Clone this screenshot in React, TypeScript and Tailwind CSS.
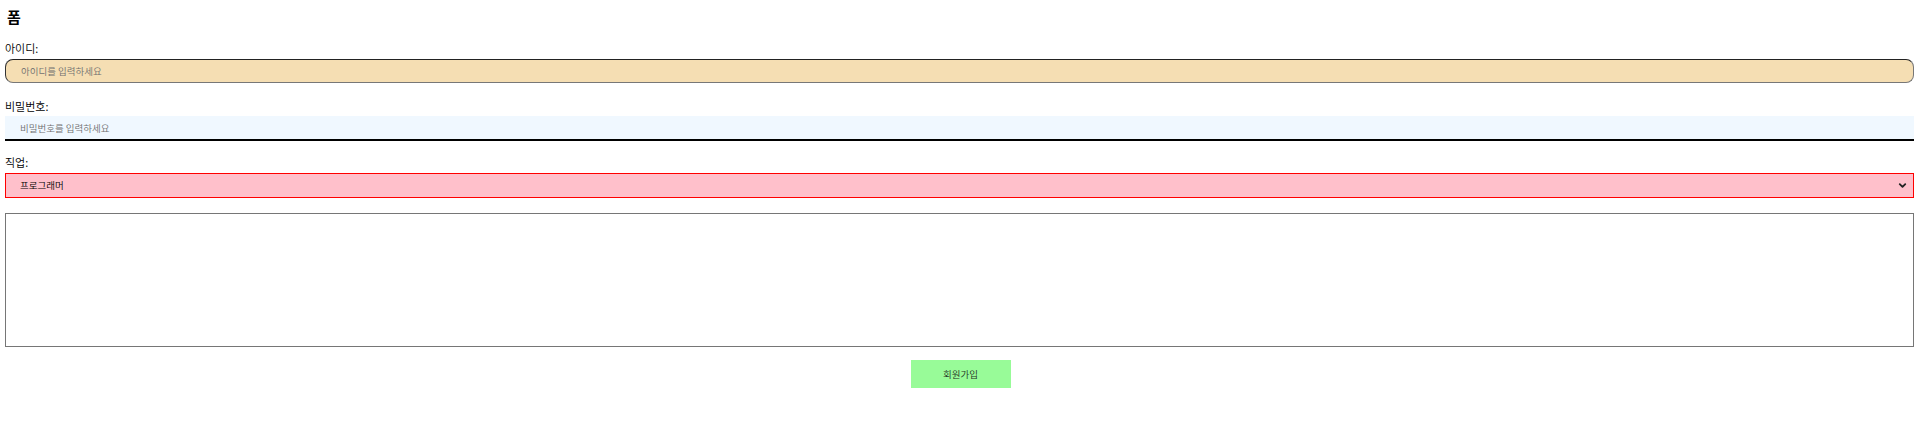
import { ChevronDown } from "lucide-react";

const font = "font-['Noto_Sans_CJK_KR','Noto_Sans',sans-serif]";

export default function App() {
  return (
    <div className={`${font} min-h-[435px] bg-white text-black`}>
      <form className="flex flex-col px-[5px]" onSubmit={(e) => e.preventDefault()}>
        <h3 className="flex h-[34px] items-center pl-[2px] text-[15px] font-semibold">폼</h3>

        <label htmlFor="userId" className="mt-[6px] flex h-[16px] items-center text-[11px] font-[350]">
          아이디:
        </label>
        <input
          id="userId"
          type="text"
          placeholder="아이디를 입력하세요"
          className="mt-[3px] block h-[24px] w-[1909px] rounded-[8px] border border-t-[#222] border-l-[#333] border-r-[#777] border-b-[#777] bg-[#f5deb3] px-[15px] text-[9.5px] font-[350] outline-none placeholder:text-[#6f6f6f]"
        />

        <label htmlFor="userPw" className="mt-[15px] flex h-[16px] items-center text-[11px] font-[350]">
          비밀번호:
        </label>
        <input
          id="userPw"
          type="password"
          placeholder="비밀번호를 입력하세요"
          className="mt-[2px] block h-[25px] w-[1909px] border-b-2 border-black bg-[#f0f8ff] px-[15px] text-[9.5px] font-[350] outline-none placeholder:text-[#6f6f6f]"
        />

        <label htmlFor="job" className="mt-[13px] flex h-[16px] items-center text-[11px] font-[350]">
          직업:
        </label>
        <div className="relative mt-[3px] h-[25px] w-[1909px]">
          <select
            id="job"
            defaultValue="programmer"
            className="block h-[25px] w-full appearance-none border border-[#ff0000] bg-[#ffc0cb] pl-[14px] text-[9.5px] font-[350] text-black outline-none"
          >
            <option value="programmer">프로그래머</option>
            <option value="designer">디자이너</option>
          </select>
          <ChevronDown
            className="pointer-events-none absolute right-[6px] top-[7px] size-[11px] text-[#222]"
            strokeWidth={4}
          />
        </div>

        <textarea className="mt-[15px] block h-[134px] w-[1909px] resize-none border border-[#767676] bg-white outline-none" />

        <div className="mt-[13px] flex justify-center">
          <button
            type="submit"
            className="ml-[5px] h-[28px] w-[100px] bg-[#98fb98] text-[9.5px] font-[350] text-[#1f2f1f]"
          >
            회원가입
          </button>
        </div>
      </form>
    </div>
  );
}
